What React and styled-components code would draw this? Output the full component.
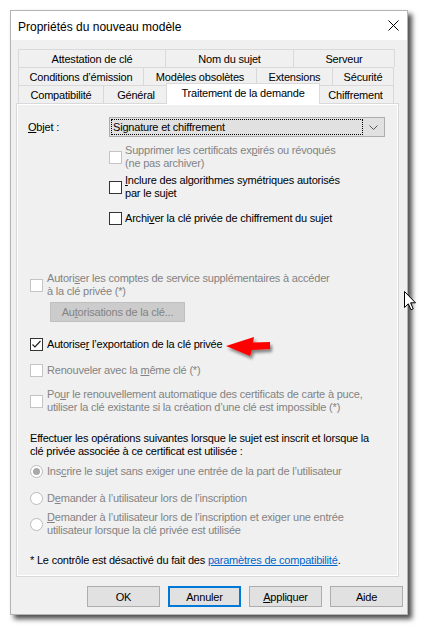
import React from 'react';
import styled, { createGlobalStyle } from 'styled-components';

const GlobalStyle = createGlobalStyle`
  html, body { margin: 0; padding: 0; background: #fff; }
  body {
    width: 425px;
    height: 632px;
    overflow: hidden;
    font-family: "Liberation Sans", Arial, sans-serif;
    font-size: 11px;
    letter-spacing: -0.2px;
    color: #000;
  }
  * { box-sizing: border-box; }
`;

const Stage = styled.div`
  position: relative;
  width: 425px;
  height: 632px;
  padding: 10px 0 0 10px;
`;

const Window = styled.div`
  width: 398px;
  height: 605px;
  border: 1px solid #b4b4b4;
  background: #f0f0f0;
  box-shadow: 4px 4px 5px rgba(0, 0, 0, 0.7);
  display: flex;
  flex-direction: column;
`;

const TitleBar = styled.div`
  height: 29px;
  background: #fff;
  display: flex;
  align-items: center;
  justify-content: space-between;
  padding: 0 8px 0 7px;
`;

const Title = styled.div`
  font-size: 12px;
  letter-spacing: 0;
  margin-top: 2px;
`;

const Client = styled.div`
  flex: 1;
  padding: 9px 5px 0 6px;
  display: flex;
  flex-direction: column;
`;

const Tabs = styled.div`
  margin-left: 1px;
  width: 379px;
  display: flex;
  flex-direction: column;
`;

const TabRow = styled.div`
  display: flex;
  align-items: flex-end;
  height: 18px;
  position: relative;
  z-index: ${p => p.$front ? 2 : 1};
`;

const Tab = styled.div`
  width: ${p => p.$w}px;
  height: 18px;
  flex: none;
  border: 1px solid #d9d9d9;
  border-bottom: none;
  margin-right: -1px;
  background: #f0f0f0;
  display: flex;
  align-items: center;
  justify-content: center;
  padding-top: 1px;
  white-space: nowrap;
`;

const ActiveTab = styled(Tab)`
  width: ${p => p.$w + 4}px;
  height: 21px;
  margin: 0 -3px -1px -2px;
  background: #fff;
  padding-top: 0;
  padding-bottom: 3px;
  position: relative;
  z-index: 3;
`;

const Panel = styled.div`
  width: 383px;
  height: 474px;
  margin-left: -1px;
  border: 1px solid #d9d9d9;
  box-shadow: inset 0 0 0 1px #fff;
  background: #f0f0f0;
  display: flex;
  flex-direction: column;
  padding: 0 0 0 11px;
`;

const ObjetRow = styled.div`
  display: flex;
  align-items: center;
  margin-top: 13px;
  height: 20px;
`;

const Label = styled.div`
  width: 81px;
  flex: none;
`;

const Combo = styled.div`
  width: 276px;
  height: 20px;
  border: 1px solid #adadad;
  background: #e1e1e1;
  display: flex;
  align-items: center;
  padding: 1px;
`;

const ComboValue = styled.div`
  flex: 1;
  height: 16px;
  border: 1px dotted #000;
  display: flex;
  align-items: center;
  padding-left: 1px;
`;

const ComboArrow = styled.div`
  width: 20px;
  display: flex;
  justify-content: center;
`;

const Group = styled.div`
  padding-left: ${p => p.$indent}px;
  display: flex;
  flex-direction: column;
`;

const OptionRow = styled.div`
  display: flex;
  align-items: center;
  gap: ${p => p.$gap ?? 4}px;
  margin-top: ${p => p.$mt || 0}px;
  color: ${p => p.$disabled ? '#838383' : '#000'};
`;

const Lines = styled.div`
  line-height: 13px;
  white-space: nowrap;
`;

const Box = styled.span`
  width: 13px;
  height: 13px;
  flex: none;
  border: 1px solid ${p => p.$disabled ? '#c4c4c4' : '#333'};
  background: #fff;
  display: flex;
  align-items: center;
  justify-content: center;
`;

const Round = styled(Box)`
  border-radius: 50%;
  border-color: #bcbcbc;
`;

const Dot = styled.span`
  width: 7px;
  height: 7px;
  border-radius: 50%;
  background: #a8a8a8;
`;

const SmallButton = styled.div`
  width: 135px;
  height: 20px;
  margin: 4px 0 0 20px;
  border: 1px solid #bfbfbf;
  background: #cccccc;
  color: #838383;
  display: flex;
  align-items: center;
  justify-content: center;
`;

const Paragraph = styled.div`
  margin-top: ${p => p.$mt || 0}px;
  line-height: 13px;
  white-space: nowrap;
`;

const Link = styled.span`
  color: #0066cc;
  text-decoration: underline;
`;

const ButtonRow = styled.div`
  display: flex;
  justify-content: flex-end;
  gap: 8px;
  margin: 9px -1px 0 0;
`;

const Button = styled.div`
  width: 73px;
  height: 21px;
  border: ${p => p.$default ? '2px solid #0078d7' : '1px solid #adadad'};
  background: #e1e1e1;
  display: flex;
  align-items: center;
  justify-content: center;
`;

const Overlay = styled.svg`
  position: absolute;
  left: ${p => p.$x}px;
  top: ${p => p.$y}px;
  overflow: visible;
`;

function Check({ checked, disabled }) {
  return (
    <Box $disabled={disabled}>
      {checked && (
        <svg width="11" height="11" viewBox="0 0 11 11">
          <path d="M1.5 5.5 L4 8 L9.5 2" fill="none" stroke="#222" strokeWidth="1.2" />
        </svg>
      )}
    </Box>
  );
}

function CheckOption({ checked, disabled, mt, gap, children }) {
  return (
    <OptionRow $mt={mt} $disabled={disabled} $gap={gap}>
      <Check checked={checked} disabled={disabled} />
      <Lines>{children}</Lines>
    </OptionRow>
  );
}

function RadioOption({ selected, mt, children }) {
  return (
    <OptionRow $mt={mt} $disabled>
      <Round>{selected && <Dot />}</Round>
      <Lines>{children}</Lines>
    </OptionRow>
  );
}

export default function App() {
  return (
    <Stage>
      <GlobalStyle />
      <Window>
        <TitleBar>
          <Title>Propriétés du nouveau modèle</Title>
          <svg width="11" height="11" viewBox="0 0 11 11">
            <path d="M0.5 0.5 L10.5 10.5 M10.5 0.5 L0.5 10.5" stroke="#000" strokeWidth="1" />
          </svg>
        </TitleBar>
        <Client>
          <Tabs>
            <TabRow>
              <Tab $w={148}>Attestation de clé</Tab>
              <Tab $w={129}>Nom du sujet</Tab>
              <Tab $w={102}>Serveur</Tab>
            </TabRow>
            <TabRow>
              <Tab $w={126}>Conditions d’émission</Tab>
              <Tab $w={114}>Modèles obsolètes</Tab>
              <Tab $w={77}>Extensions</Tab>
              <Tab $w={62}>Sécurité</Tab>
            </TabRow>
            <TabRow $front>
              <Tab $w={86}>Compatibilité</Tab>
              <Tab $w={66}>Général</Tab>
              <ActiveTab $w={150}>Traitement de la demande</ActiveTab>
              <Tab $w={77}>Chiffrement</Tab>
            </TabRow>
          </Tabs>
          <Panel>
            <ObjetRow>
              <Label><u>O</u>bjet :</Label>
              <Combo>
                <ComboValue>Signature et chiffrement</ComboValue>
                <ComboArrow>
                  <svg width="9" height="5" viewBox="0 0 9 5">
                    <path d="M0.5 0.5 L4.5 4.5 L8.5 0.5" fill="none" stroke="#555" strokeWidth="1" />
                  </svg>
                </ComboArrow>
              </Combo>
            </ObjetRow>

            <Group $indent={81}>
              <CheckOption disabled mt={7} gap={3}>
                Supprimer les certificats ex<u>p</u>irés ou révoqués<br />(ne pas archiver)
              </CheckOption>
              <CheckOption mt={4} gap={3}>
                <u>I</u>nclure des algorithmes symétriques autorisés<br />par le sujet
              </CheckOption>
              <CheckOption mt={12} gap={3}>
                Archi<u>v</u>er la clé privée de chiffrement du sujet
              </CheckOption>
            </Group>

            <Group $indent={2}>
              <CheckOption disabled mt={47}>
                Autori<u>s</u>er les comptes de service supplémentaires à accéder<br />à la clé privée (*)
              </CheckOption>
              <SmallButton>Au<u>t</u>orisations de la clé...</SmallButton>
              <CheckOption checked mt={16}>
                Autorise<u>r</u> l’exportation de la clé privée
              </CheckOption>
              <CheckOption disabled mt={13}>
                Renouveler avec la <u>m</u>ême clé (*)
              </CheckOption>
              <CheckOption disabled mt={11}>
                Po<u>u</u>r le renouvellement automatique des certificats de carte à puce,<br />
                utiliser la clé existante si la création d’une clé est impossible (*)
              </CheckOption>
              <Paragraph $mt={18}>
                Effectuer les opérations suivantes lorsque le sujet est inscrit et lorsque la<br />
                clé privée associée à ce certificat est utilisée :
              </Paragraph>
              <RadioOption selected mt={7}>
                Ins<u>c</u>rire le sujet sans exiger une entrée de la part de l’utilisateur
              </RadioOption>
              <RadioOption mt={14}>
                D<u>e</u>mander à l’utilisateur lors de l’inscription
              </RadioOption>
              <RadioOption mt={6}>
                <u>D</u>emander à l’utilisateur lors de l’inscription et exiger une entrée<br />
                utilisateur lorsque la clé privée est utilisée
              </RadioOption>
              <Paragraph $mt={17}>
                * Le contrôle est désactivé du fait des <Link>paramètres de compatibilité</Link>.
              </Paragraph>
            </Group>
          </Panel>
          <ButtonRow>
            <Button>OK</Button>
            <Button $default>Annuler</Button>
            <Button><u>A</u>ppliquer</Button>
            <Button>Aide</Button>
          </ButtonRow>
        </Client>
      </Window>

      <Overlay $x={224} $y={334} width="50" height="26" viewBox="0 0 50 26">
        <defs>
          <filter id="sh" x="-20%" y="-30%" width="150%" height="180%">
            <feDropShadow dx="2" dy="3" stdDeviation="1.5" floodColor="#000" floodOpacity="0.45" />
          </filter>
        </defs>
        <path
          d="M2 12 L30 3 L29 8.5 L46 8 L46 15 L28 16 L26 22 Z"
          fill="#ff0000"
          filter="url(#sh)"
        />
      </Overlay>

      <Overlay $x={404} $y={291} width="12" height="20" viewBox="0 0 12 20">
        <path
          d="M0.5 0.5 L0.5 16.5 L4.3 12.8 L7 18.8 L9.2 17.8 L6.6 11.8 L11.5 11.8 Z"
          fill="#fff"
          stroke="#000"
          strokeWidth="1"
          strokeLinejoin="miter"
        />
      </Overlay>
    </Stage>
  );
}
